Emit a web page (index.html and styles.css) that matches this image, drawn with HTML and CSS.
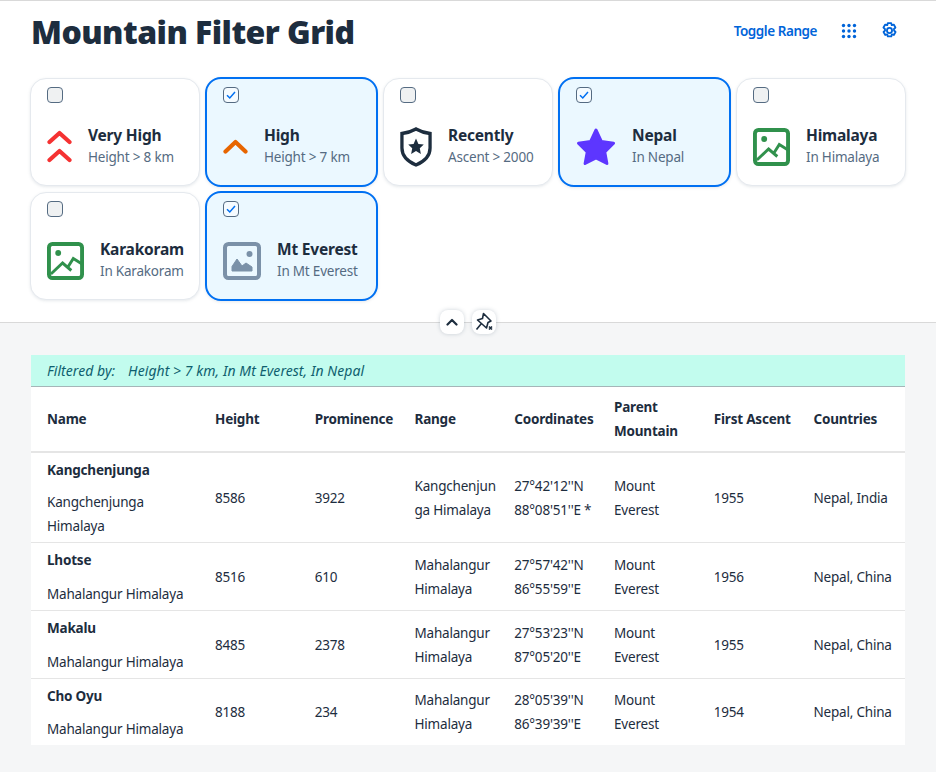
FILE: index.html
```html
<!DOCTYPE html>
<html>
<head>
    <title>Mountain Filter Grid</title>
    <link rel="stylesheet" href="styles.css">
</head>
<body>
    <section class="top">
        <header class="title-bar">
            <h1>Mountain Filter Grid</h1>
            <div class="actions">
                <a class="toggle">Toggle Range</a>
                <svg class="grid-icon" width="16" height="16" viewBox="0 0 16 16" fill="#0064d9">
                    <circle cx="2.5" cy="2.5" r="1.7"/><circle cx="8" cy="2.5" r="1.7"/><circle cx="13.5" cy="2.5" r="1.7"/>
                    <circle cx="2.5" cy="8" r="1.7"/><circle cx="8" cy="8" r="1.7"/><circle cx="13.5" cy="8" r="1.7"/>
                    <circle cx="2.5" cy="13.5" r="1.7"/><circle cx="8" cy="13.5" r="1.7"/><circle cx="13.5" cy="13.5" r="1.7"/>
                </svg>
                <svg class="gear-icon" width="17" height="17" viewBox="0 0 16 16" fill="none" stroke="#0064d9" stroke-width="1.7" stroke-linejoin="round">
                    <path d="M6.400 1h3.200l.5 2 1.900-.6 1.600 2.800-1.400 1.400.1 1.400 1.400 1.400-1.600 2.800-1.900-.6-.5 2H6.400l-.5-2-1.900.6-1.600-2.800 1.400-1.400-.1-1.400-1.400-1.400L4 2.400l1.900.6z"/>
                    <circle cx="8" cy="8" r="2.400"/>
                </svg>
            </div>
        </header>

        <div class="cards">
            <div class="card">
                <span class="check"></span>
                <div class="card-body">
                    <svg width="25" height="33" viewBox="0 0 25 33" fill="none" stroke="#f53232" stroke-width="4.200" stroke-linecap="round" stroke-linejoin="round">
                        <path d="M2.500 12 12.500 3 22.500 12"/><path d="M2.500 30 12.500 21 22.500 30"/>
                    </svg>
                    <div><div class="card-title">Very High</div><div class="card-sub">Height &gt; 8 km</div></div>
                </div>
            </div>
            <div class="card selected">
                <span class="check"><svg width="10" height="10" viewBox="0 0 10 10" fill="none" stroke="#0070f2" stroke-width="1.5"><path d="M1 5.200 3.800 8 9 2"/></svg></span>
                <div class="card-body">
                    <svg width="25" height="15" viewBox="0 0 25 15" fill="none" stroke="#e76500" stroke-width="4.200" stroke-linecap="round" stroke-linejoin="round">
                        <path d="M2.500 12.500 12.500 3 22.500 12.500"/>
                    </svg>
                    <div><div class="card-title">High</div><div class="card-sub">Height &gt; 7 km</div></div>
                </div>
            </div>
            <div class="card">
                <span class="check"></span>
                <div class="card-body">
                    <svg width="32" height="40" viewBox="0 0 33 40" preserveAspectRatio="none">
                        <path d="M16.500 2 C21 4.500 26 6 31 6.500 V21 C31 29 25 34.500 16.500 38 C8 34.500 2 29 2 21 V6.500 C7 6 12 4.500 16.500 2Z" fill="none" stroke="#1d2d3e" stroke-width="3.400"/>
                        <path d="M16.500 11.500 19 17 24.500 17.600 20.400 21.300 21.500 27 16.500 24.100 11.500 27 12.600 21.300 8.500 17.600 14 17Z" fill="#1d2d3e"/>
                    </svg>
                    <div><div class="card-title">Recently</div><div class="card-sub">Ascent &gt; 2000</div></div>
                </div>
            </div>
            <div class="card selected">
                <span class="check"><svg width="10" height="10" viewBox="0 0 10 10" fill="none" stroke="#0070f2" stroke-width="1.5"><path d="M1 5.200 3.800 8 9 2"/></svg></span>
                <div class="card-body">
                    <svg width="40" height="39" viewBox="0 0 41 39" preserveAspectRatio="none">
                        <path d="M20.500 3 26 14.500 38.500 16.200 29.500 25 31.700 36.500 20.500 31 9.300 36.500 11.500 25 2.500 16.200 15 14.500Z" fill="#5d36ff" stroke="#5d36ff" stroke-width="3" stroke-linejoin="round"/>
                    </svg>
                    <div><div class="card-title">Nepal</div><div class="card-sub">In Nepal</div></div>
                </div>
            </div>
            <div class="card">
                <span class="check"></span>
                <div class="card-body">
                    <svg width="37" height="38" viewBox="0 0 38 38" preserveAspectRatio="none">
                        <rect x="2" y="2" width="34" height="34" rx="3.500" fill="none" stroke="#30914c" stroke-width="4"/>
                        <circle cx="11.500" cy="11" r="3" fill="#30914c"/>
                        <path d="M4 32 16 21 25 28.500M21.500 25 27 16.500 36 22" fill="none" stroke="#30914c" stroke-width="3"/>
                    </svg>
                    <div><div class="card-title">Himalaya</div><div class="card-sub">In Himalaya</div></div>
                </div>
            </div>
            <div class="card">
                <span class="check"></span>
                <div class="card-body">
                    <svg width="37" height="38" viewBox="0 0 38 38" preserveAspectRatio="none">
                        <rect x="2" y="2" width="34" height="34" rx="3.500" fill="none" stroke="#30914c" stroke-width="4"/>
                        <circle cx="11.500" cy="11" r="3" fill="#30914c"/>
                        <path d="M4 32 16 21 25 28.500M21.500 25 27 16.500 36 22" fill="none" stroke="#30914c" stroke-width="3"/>
                    </svg>
                    <div><div class="card-title">Karakoram</div><div class="card-sub">In Karakoram</div></div>
                </div>
            </div>
            <div class="card selected">
                <span class="check"><svg width="10" height="10" viewBox="0 0 10 10" fill="none" stroke="#0070f2" stroke-width="1.5"><path d="M1 5.200 3.800 8 9 2"/></svg></span>
                <div class="card-body">
                    <svg width="38" height="38" viewBox="0 0 38 38">
                        <rect x="2" y="2" width="34" height="34" rx="3.500" fill="none" stroke="#7b91a8" stroke-width="4"/>
                        <circle cx="26.500" cy="12" r="3" fill="#7b91a8"/>
                        <path d="M9 29V24.500L14 17 19 24 23 21 29 25V29Z" fill="#7b91a8" stroke="#7b91a8" stroke-linejoin="round"/>
                    </svg>
                    <div><div class="card-title">Mt Everest</div><div class="card-sub">In Mt Everest</div></div>
                </div>
            </div>
        </div>

        <div class="float-btns">
            <button class="float-btn">
                <svg width="12" height="8" viewBox="0 0 12 8" fill="none" stroke="#1d2d3e" stroke-width="2.200" stroke-linecap="round" stroke-linejoin="round"><path d="M1.500 6.500 6 2l4.500 4.500"/></svg>
            </button>
            <button class="float-btn">
                <svg width="24" height="24" viewBox="0 0 24 24" fill="none" stroke="#1d2d3e" stroke-width="1.600" stroke-linejoin="round">
                    <path d="M11.500 3.500 19 11 16 12.500 14.500 18 5.500 10 10.500 8.500ZM9 14 4.500 19.500"/>
                    <path d="M17 16.500 20 19.500M20 16.500 17 19.500"/>
                </svg>
            </button>
        </div>
    </section>

    <main class="content">
        <div class="panel">
            <div class="filter-bar"><span class="filter-label">Filtered by:</span>Height &gt; 7 km, In Mt Everest, In Nepal</div>
            <table>
                <colgroup>
                    <col class="col-name"><col class="col"><col class="col"><col class="col"><col class="col"><col class="col"><col class="col"><col class="col-last">
                </colgroup>
                <thead>
                    <tr>
                        <th>Name</th><th>Height</th><th>Prominence</th><th>Range</th><th>Coordinates</th><th>Parent Mountain</th><th>First Ascent</th><th>Countries</th>
                    </tr>
                </thead>
                <tbody>
                    <tr>
                        <td><div class="name-cell"><b>Kangchenjunga</b><span>Kangchenjunga Himalaya</span></div></td>
                        <td>8586</td><td>3922</td><td>Kangchenjunga Himalaya</td><td>27°42'12''N 88°08'51''E *</td><td>Mount Everest</td><td>1955</td><td>Nepal, India</td>
                    </tr>
                    <tr>
                        <td><div class="name-cell"><b>Lhotse</b><span>Mahalangur Himalaya</span></div></td>
                        <td>8516</td><td>610</td><td>Mahalangur Himalaya</td><td>27°57'42''N 86°55'59''E</td><td>Mount Everest</td><td>1956</td><td>Nepal, China</td>
                    </tr>
                    <tr>
                        <td><div class="name-cell"><b>Makalu</b><span>Mahalangur Himalaya</span></div></td>
                        <td>8485</td><td>2378</td><td>Mahalangur Himalaya</td><td>27°53'23''N 87°05'20''E</td><td>Mount Everest</td><td>1955</td><td>Nepal, China</td>
                    </tr>
                    <tr>
                        <td><div class="name-cell"><b>Cho Oyu</b><span>Mahalangur Himalaya</span></div></td>
                        <td>8188</td><td>234</td><td>Mahalangur Himalaya</td><td>28°05'39''N 86°39'39''E</td><td>Mount Everest</td><td>1954</td><td>Nepal, China</td>
                    </tr>
                </tbody>
            </table>
        </div>
    </main>
</body>
</html>
```

FILE: styles.css
```css
* {
    box-sizing: border-box;
}

html, body {
    height: 100%;
}

body {
    margin: 0;
    height: 772px;
    overflow: hidden;
    font-family: "Noto Sans", "Open Sans", sans-serif;
    font-size: 13.5px;
    letter-spacing: -0.2px;
    color: #1d2d3e;
    background-color: #f5f6f7;
}

.top {
    position: relative;
    height: 323px;
    padding: 0 30px;
    background-color: #fff;
    border-top: 1px solid #d9d9d9;
    border-bottom: 1px solid #d9d9d9;
}

.title-bar {
    display: flex;
    align-items: center;
    justify-content: space-between;
    height: 60px;
    padding-right: 8px;
}

h1 {
    margin: 0;
    padding: 1px 0 0 1px;
    font-size: 32px;
    font-weight: 900;
    line-height: 60px;
    letter-spacing: -0.55px;
    color: #1d2d3e;
}

.actions {
    display: flex;
    align-items: center;
    padding-bottom: 1px;
}

.toggle {
    font-weight: 600;
    letter-spacing: -0.45px;
    color: #0064d9;
}

.grid-icon {
    margin-left: 24px;
}

.gear-icon {
    margin-left: 24px;
}

.cards {
    display: flex;
    flex-wrap: wrap;
    gap: 6px 5px;
    margin-top: 17px;
}

.card {
    width: 170px;
    height: 108px;
    padding: 8px 16px;
    background-color: #fff;
    border: 1px solid #e5e9ee;
    border-radius: 16px;
    box-shadow: 0 1px 3px rgba(85, 107, 130, 0.15);
}

.card.selected {
    width: 173px;
    height: 110px;
    margin: -1px 0;
    background-color: #ebf8ff;
    border: 2px solid #0070f2;
}

.check {
    display: flex;
    align-items: center;
    justify-content: center;
    width: 16px;
    height: 16px;
    background-color: #eff1f2;
    border: 1px solid #556b82;
    border-radius: 4px;
}

.selected .check {
    background-color: #f5fbff;
}

.card-body {
    display: flex;
    align-items: center;
    gap: 16px;
    height: 43px;
    margin-top: 22px;
    white-space: nowrap;
}

.card-body svg {
    flex: none;
}

.card-title {
    font-size: 15.5px;
    font-weight: 700;
    line-height: 21px;
}

.card-sub {
    padding-top: 1px;
    line-height: 21px;
    color: #556b82;
}

.float-btns {
    position: absolute;
    top: 309px;
    left: 440px;
    display: flex;
    gap: 8px;
}

.float-btn {
    display: flex;
    align-items: center;
    justify-content: center;
    width: 24px;
    height: 24px;
    padding: 0;
    background-color: #fff;
    border: none;
    border-radius: 8px;
    box-shadow: 0 0 4px rgba(85, 107, 130, 0.3);
}

.content {
    padding: 32px 31px 0;
}

.panel {
    height: 390px;
    overflow: hidden;
    background-color: #fff;
}

.filter-bar {
    height: 32px;
    padding-left: 16px;
    font-size: 14px;
    letter-spacing: 0.05px;
    line-height: 31px;
    font-style: italic;
    color: #0f5f6f;
    background-color: #c2fcee;
    border-bottom: 1px solid #a5b5b8;
}

.filter-label {
    margin-right: 13px;
}

table {
    width: 874px;
    table-layout: fixed;
    border-collapse: collapse;
}

.col-name {
    width: 168px;
}

.col {
    width: 99.75px;
}

.col-last {
    width: 107.5px;
}

th, td {
    padding: 5px 2px 4px 16px;
    line-height: 24px;
    text-align: left;
    vertical-align: middle;
    overflow-wrap: anywhere;
}

th {
    height: 65px;
    padding: 4px 4px 5px 16px;
    font-weight: 700;
    border-bottom: 2px solid #e5e5e5;
}

td {
    border-bottom: 1px solid #e5e5e5;
}

.name-cell {
    display: flex;
    flex-direction: column;
    justify-content: space-between;
    gap: 8px;
    min-height: 57.8px;
}
```
